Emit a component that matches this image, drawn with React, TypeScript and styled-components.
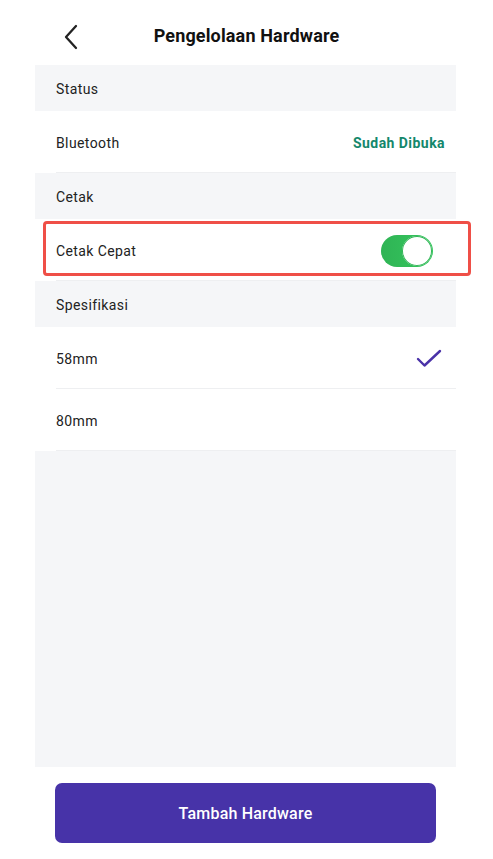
import React from "react";
import styled, { createGlobalStyle } from "styled-components";

const Global = createGlobalStyle`
  html, body { margin: 0; padding: 0; background: #ffffff; }
  body { font-family: Roboto, "Noto Sans", "Liberation Sans", sans-serif; color: #222; }
  * { box-sizing: border-box; }
`;

const Page = styled.div`
  width: 493px;
  min-height: 859px;
  display: flex;
  flex-direction: column;
  background: #fff;
`;

const Header = styled.header`
  height: 65px;
  display: flex;
  align-items: center;
  justify-content: center;
  position: relative;
  padding-top: 6px;
`;

const BackButton = styled.button`
  position: absolute;
  left: 58px;
  top: 22px;
  width: 26px;
  height: 30px;
  border: none;
  background: transparent;
  padding: 0;
  display: flex;
  align-items: center;
  justify-content: center;
  cursor: pointer;
`;

const Title = styled.h1`
  margin: 0;
  font-size: 18px;
  font-weight: 700;
  color: #111;
  letter-spacing: 0.15px;
  padding-left: 0px;
`;

const Panel = styled.main`
  margin-left: 35px;
  width: 421px;
  flex: 1;
  display: flex;
  flex-direction: column;
  background: #f5f6f8;
`;

const SectionTitle = styled.div`
  height: 46px;
  display: flex;
  align-items: center;
  padding-left: 21px;
  padding-top: 1px;
  font-size: 14px;
  color: #222;
  letter-spacing: 0.4px;
  background: #f5f6f8;
`;

const Row = styled.div`
  position: relative;
  height: 62px;
  background: #fff;
  display: flex;
  align-items: center;
  justify-content: space-between;
  padding-left: 21px;
  padding-top: 1px;
  font-size: 14px;
  color: #222;
  letter-spacing: 0.4px;
  &::after {
    content: "";
    position: absolute;
    left: 21px;
    right: 0;
    bottom: 0;
    height: 1px;
    background: #eeeff1;
  }
`;

const StatusValue = styled.span<{ $right: number }>`
  margin-right: ${(p) => p.$right}px;
  color: #13876b;
  font-weight: 700;
  font-size: 14px;
  letter-spacing: 0.45px;
`;

const Highlight = styled.div`
  position: absolute;
  left: 8px;
  right: -15px;
  top: 2px;
  bottom: 5px;
  border: 3px solid #ef4f47;
  border-radius: 4px;
  pointer-events: none;
`;

const Switch = styled.div<{ $on: boolean }>`
  margin-right: 23px;
  width: 52px;
  height: 32px;
  border-radius: 16px;
  background: ${(p) => (p.$on ? "linear-gradient(90deg, #2fb455, #36c75e)" : "#ddd")};
  position: relative;
  &::after {
    content: "";
    position: absolute;
    top: 1px;
    ${(p) => (p.$on ? "right: 1px;" : "left: 1px;")}
    width: 30px;
    height: 30px;
    border-radius: 50%;
    background: #fff;
    box-shadow: inset 0 0 0 1px #2fb455;
  }
`;

const CheckWrap = styled.span`
  margin-right: 14px;
  display: flex;
`;

const Filler = styled.div`
  flex: 1;
  background: #f5f6f8;
`;

const Footer = styled.div`
  padding: 16px 0 16px 55px;
`;

const PrimaryButton = styled.button`
  width: 381px;
  height: 60px;
  border: none;
  border-radius: 7px;
  background: #4733a8;
  color: #fff;
  font-family: Roboto, "Noto Sans", "Liberation Sans", sans-serif;
  font-size: 16px;
  font-weight: 500;
  letter-spacing: 0.2px;
  cursor: pointer;
`;

export default function App() {
  return (
    <>
      <Global />
      <Page>
        <Header>
          <BackButton aria-label="Kembali">
            <svg width="16" height="26" viewBox="0 0 16 26" fill="none">
              <path d="M13 2 L3 13 L13 24" stroke="#222" strokeWidth="2.3" strokeLinecap="round" strokeLinejoin="round" />
            </svg>
          </BackButton>
          <Title>Pengelolaan Hardware</Title>
        </Header>
        <Panel>
          <SectionTitle>Status</SectionTitle>
          <Row>
            <span>Bluetooth</span>
            <StatusValue $right={11}>Sudah Dibuka</StatusValue>
          </Row>
          <SectionTitle>Cetak</SectionTitle>
          <Row>
            <span>Cetak Cepat</span>
            <Switch $on={true} />
            <Highlight />
          </Row>
          <SectionTitle>Spesifikasi</SectionTitle>
          <Row>
            <span>58mm</span>
            <CheckWrap>
              <svg width="26" height="20" viewBox="0 0 26 20" fill="none">
                <path d="M2 10 L8.5 16.5 L24 2" stroke="#4a32a8" strokeWidth="2.4" strokeLinecap="round" strokeLinejoin="round" />
              </svg>
            </CheckWrap>
          </Row>
          <Row>
            <span>80mm</span>
          </Row>
          <Filler />
        </Panel>
        <Footer>
          <PrimaryButton>Tambah Hardware</PrimaryButton>
        </Footer>
      </Page>
    </>
  );
}
